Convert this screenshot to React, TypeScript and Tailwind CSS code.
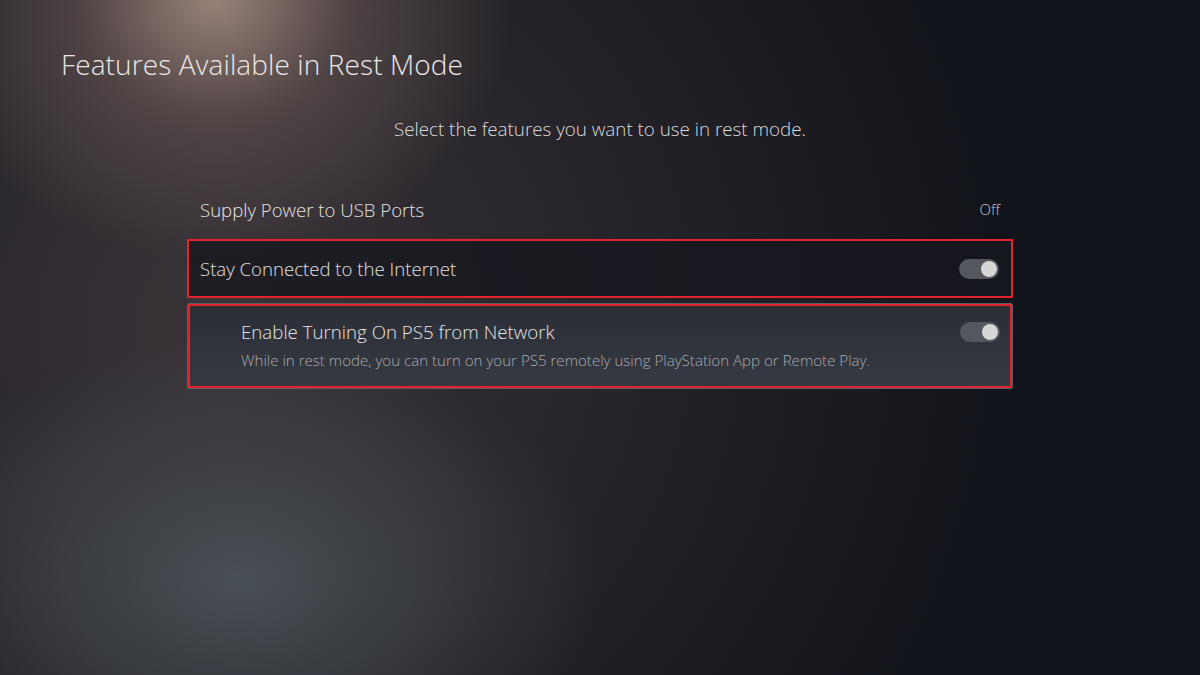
import React from 'react';

// ── Toggle switch (PS5 style) ─────────────────────────────
function Toggle({ on = true }: { on?: boolean }) {
  return (
    <div className="w-[40px] h-[20px] rounded-full bg-[#55575e] flex items-center px-[2px] justify-end">
      <div className={on ? 'w-[16px] h-[16px] rounded-full bg-[#d6d6d6]' : 'w-[16px] h-[16px] rounded-full bg-[#8a8a8a]'} />
    </div>
  );
}

export default function App() {
  return (
    <div
      className="relative w-[1200px] h-[675px] overflow-hidden font-['Open_Sans',sans-serif] text-[#e6e4e4] bg-[#12141b]
        bg-[radial-gradient(ellipse_300px_260px_at_215px_0px,rgba(165,140,130,0.9),rgba(115,95,90,0.5)_45%,transparent_100%),radial-gradient(ellipse_360px_240px_at_240px_580px,rgba(78,88,94,0.8),transparent_100%),radial-gradient(ellipse_780px_760px_at_220px_320px,rgba(68,60,64,0.8),transparent_100%)]"
    >
      {/* Header */}
      <h1 className="pl-[61px] pt-[47px] text-[28px] leading-[34px] font-light tracking-[0.1px] text-[#ebe8e8]">
        Features Available in Rest Mode
      </h1>

      <p className="mt-[36px] text-center text-[18.8px] leading-[24px] font-light text-[#dcdcdc]">
        Select the features you want to use in rest mode.
      </p>

      {/* Settings list */}
      <div className="ml-[187px] w-[826px] mt-[37px] flex flex-col">
        <div className="h-[61px] flex items-center justify-between pl-[13px] pr-[13px] pt-[2px]">
          <span className="text-[18.6px] font-light text-[#e4e2e2]">Supply Power to USB Ports</span>
          <span className="text-[15px] font-light text-[#c8c8cc]">Off</span>
        </div>

        <div className="h-[59px] flex items-center justify-between pl-[11px] pr-[12px] border-2 border-[#e3232c] bg-[#17181f]/80">
          <span className="text-[18.6px] font-light text-[#e4e2e2]">Stay Connected to the Internet</span>
          <Toggle />
        </div>

        <div className="mt-[5px] border border-[#5b5e66] rounded-[2px]">
          <div className="h-[84px] border-2 border-[#e3232c] bg-[linear-gradient(180deg,#2b2e36,#353941)] flex items-start justify-between pl-[51px] pr-[10px] pt-[13px]">
            <div className="flex flex-col">
              <span className="text-[18.7px] leading-[26px] font-light text-[#e6e4e4]">Enable Turning On PS5 from Network</span>
              <span className="mt-[4px] text-[15.1px] leading-[22px] font-light text-[#a9abb0]">
                While in rest mode, you can turn on your PS5 remotely using PlayStation App or Remote Play.
              </span>
            </div>
            <div className="pt-[3px]">
              <Toggle />
            </div>
          </div>
        </div>
      </div>
    </div>
  );
}
